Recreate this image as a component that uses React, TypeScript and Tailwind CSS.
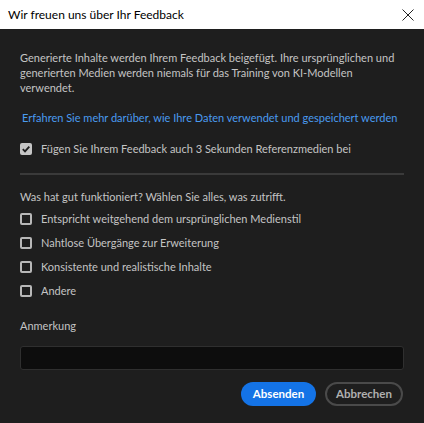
import React from 'react';

const options = [
  'Entspricht weitgehend dem ursprünglichen Medienstil',
  'Nahtlose Übergänge zur Erweiterung',
  'Konsistente und realistische Inhalte',
  'Andere',
];

function Box({ checked }: { checked?: boolean }) {
  return (
    <span
      className={`w-[12px] h-[12px] rounded-[2px] flex items-center justify-center shrink-0 ${
        checked ? 'bg-[#c6c6c6]' : 'border-2 border-[#b8b8b8] bg-[#1e1e1e]'
      }`}
    >
      {checked && (
        <svg width="10" height="10" viewBox="0 0 10 10">
          <path d="M1.8 5.2 L4 7.4 L8.3 2.6" fill="none" stroke="#1e1e1e" strokeWidth="1.8" />
        </svg>
      )}
    </span>
  );
}

export default function App() {
  return (
    <div className="w-[424px] h-[423px] flex flex-col bg-[#1e1e1e] font-['Lato',sans-serif]">
      <div className="h-[29px] bg-white flex items-center justify-between pl-[8px] pr-[10px] shrink-0">
        <span className="text-[12px] text-black">Wir freuen uns über Ihr Feedback</span>
        <svg width="12" height="12" viewBox="0 0 12 12">
          <path d="M0.5 0.5 L11.5 11.5 M11.5 0.5 L0.5 11.5" stroke="#222" strokeWidth="1" />
        </svg>
      </div>

      <div className="flex flex-col px-[20px] pt-[21px] text-[11px] text-[#c4c4c4]">
        <div className="flex flex-col leading-[15px]">
          <span className="whitespace-nowrap">{'Generierte Inhalte werden Ihrem Feedback beigefügt. Ihre ursprünglichen und'}</span>
          <span className="whitespace-nowrap">{'generierten Medien werden niemals für das Training von KI-Modellen'}</span>
          <span>verwendet.</span>
        </div>
        <a className="mt-[15px] ml-[2px] text-[#4a9bf0] leading-[15px] whitespace-nowrap">
          Erfahren Sie mehr darüber, wie Ihre Daten verwendet und gespeichert werden
        </a>
        <label className="mt-[16px] flex items-center gap-[9px] leading-[15px]">
          <Box checked />
          <span>Fügen Sie Ihrem Feedback auch 3 Sekunden Referenzmedien bei</span>
        </label>
        <div className="mt-[17px] h-[2px] bg-[#3a3a3a] w-[384px]" />
        <p className="mt-[14px] leading-[15px]">Was hat gut funktioniert? Wählen Sie alles, was zutrifft.</p>
        <div className="mt-[7px] flex flex-col gap-[9px]">
          {options.map((o) => (
            <label key={o} className="flex items-center gap-[9px] leading-[15px]">
              <Box />
              <span>{o}</span>
            </label>
          ))}
        </div>
        <p className="mt-[20px] leading-[15px]">Anmerkung</p>
        <div className="mt-[13px] h-[24px] rounded-[3px] bg-[#0d0d0d] border border-[#2f2f2f]" />
        <div className="mt-[12px] flex justify-end gap-[9px] pr-[1px]">
          <button className="h-[24px] w-[75px] rounded-full bg-[#1473e6] text-white font-bold text-[11.5px]">Absenden</button>
          <button className="h-[24px] w-[78px] rounded-full border-2 border-[#4a4a4a] text-[#b0b0b0] font-bold text-[11.5px]">Abbrechen</button>
        </div>
      </div>
    </div>
  );
}
